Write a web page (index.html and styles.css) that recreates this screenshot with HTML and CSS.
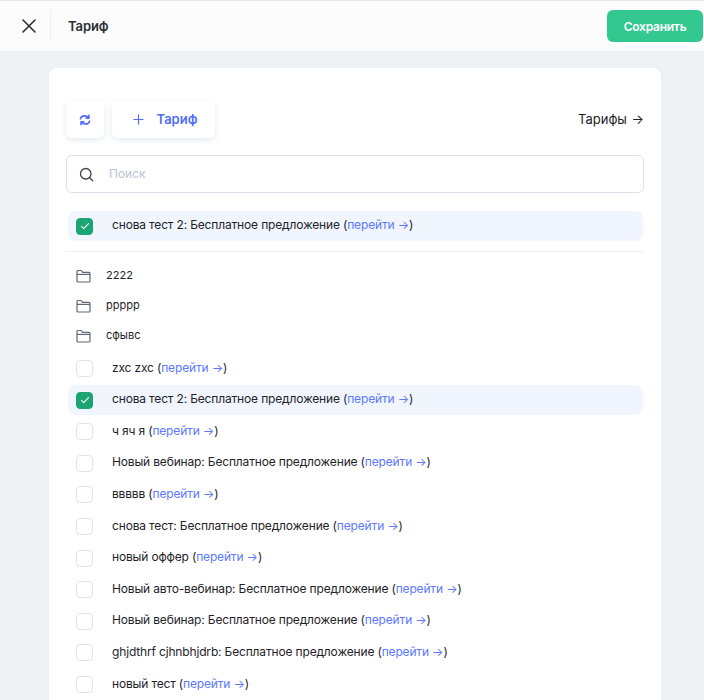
FILE: index.html
```html
<!DOCTYPE html>
<html lang="ru">
<head>
<meta charset="utf-8">
<title>Тариф</title>
<link rel="stylesheet" href="styles.css">
</head>
<body>
<header class="topbar">
  <button class="close" aria-label="Закрыть">
    <svg width="16" height="16" viewBox="0 0 16 16" fill="none" stroke="#2b2f36" stroke-width="1.6" stroke-linecap="round"><path d="M2 2l12 12M14 2L2 14"/></svg>
  </button>
  <div class="title">Тариф</div>
  <button class="save">Сохранить</button>
</header>
<main class="card">
  <div class="toolbar">
    <button class="tool tool-icon" aria-label="Обновить">
      <svg width="12" height="12" viewBox="0 0 14 14" fill="none" stroke="#4f6ef7" stroke-width="1.9" stroke-linecap="round" stroke-linejoin="round"><path d="M1.6 5.6C2.3 3.5 4.3 2.2 6.4 2.2c1.9 0 3.5.8 4.6 2.4"/><path d="M11.6 1.4v3.4H8.4"/><path d="M12.4 8.4c-.7 2.1-2.7 3.4-4.8 3.4-1.9 0-3.5-.8-4.6-2.4"/><path d="M2.4 12.6V9.2h3.2"/></svg>
    </button>
    <button class="tool tool-add">
      <svg width="11" height="11" viewBox="0 0 12 12" fill="none" stroke="#4f6ef7" stroke-width="1.3" stroke-linecap="round"><path d="M6 1v10M1 6h10"/></svg>
      <span>Тариф</span>
    </button>
    <a class="all-link">Тарифы <span class="arrow">→</span></a>
  </div>
  <div class="search">
    <svg width="15" height="15" viewBox="0 0 16 16" fill="none" stroke="#3d434d" stroke-width="1.4" stroke-linecap="round"><circle cx="7.2" cy="7.2" r="5.6"/><path d="M11.4 11.4l3.2 3.2"/></svg>
    <span class="placeholder">Поиск</span>
  </div>
  <div class="row active">
    <span class="check on"><svg width="10" height="8" viewBox="0 0 10 8" fill="none" stroke="#fff" stroke-width="1.1" stroke-linecap="round" stroke-linejoin="round"><path d="M1.5 4.4l2.2 2.2L8.5 1.6"/></svg></span>
    <span class="label">снова тест 2: Бесплатное предложение (<a class="go">перейти →</a>)</span>
  </div>
  <hr class="divider">
  <div class="folders">
    <div class="folder"><svg class="folder-icon" width="15" height="14" viewBox="0 0 15 14" fill="none" stroke="#5f6675" stroke-width="1.2" stroke-linejoin="round"><path d="M1 2.6c0-.7.5-1.1 1.1-1.1h3.2l1.4 1.9h6.2c.6 0 1.1.5 1.1 1.1v7.4c0 .6-.5 1.1-1.1 1.1H2.1c-.6 0-1.1-.5-1.1-1.1z"/><path d="M1 5.4h13"/></svg><span>2222</span></div>
    <div class="folder"><svg class="folder-icon" width="15" height="14" viewBox="0 0 15 14" fill="none" stroke="#5f6675" stroke-width="1.2" stroke-linejoin="round"><path d="M1 2.6c0-.7.5-1.1 1.1-1.1h3.2l1.4 1.9h6.2c.6 0 1.1.5 1.1 1.1v7.4c0 .6-.5 1.1-1.1 1.1H2.1c-.6 0-1.1-.5-1.1-1.1z"/><path d="M1 5.4h13"/></svg><span>ppppp</span></div>
    <div class="folder"><svg class="folder-icon" width="15" height="14" viewBox="0 0 15 14" fill="none" stroke="#5f6675" stroke-width="1.2" stroke-linejoin="round"><path d="M1 2.6c0-.7.5-1.1 1.1-1.1h3.2l1.4 1.9h6.2c.6 0 1.1.5 1.1 1.1v7.4c0 .6-.5 1.1-1.1 1.1H2.1c-.6 0-1.1-.5-1.1-1.1z"/><path d="M1 5.4h13"/></svg><span>сфывс</span></div>
  </div>
  <div class="list">
    <div class="row"><span class="check"></span><span class="label">zxc zxc (<a class="go">перейти →</a>)</span></div>
    <div class="row active"><span class="check on"><svg width="10" height="8" viewBox="0 0 10 8" fill="none" stroke="#fff" stroke-width="1.1" stroke-linecap="round" stroke-linejoin="round"><path d="M1.5 4.4l2.2 2.2L8.5 1.6"/></svg></span><span class="label">снова тест 2: Бесплатное предложение (<a class="go">перейти →</a>)</span></div>
    <div class="row"><span class="check"></span><span class="label">ч яч я (<a class="go">перейти →</a>)</span></div>
    <div class="row"><span class="check"></span><span class="label">Новый вебинар: Бесплатное предложение (<a class="go">перейти →</a>)</span></div>
    <div class="row"><span class="check"></span><span class="label">ввввв (<a class="go">перейти →</a>)</span></div>
    <div class="row"><span class="check"></span><span class="label">снова тест: Бесплатное предложение (<a class="go">перейти →</a>)</span></div>
    <div class="row"><span class="check"></span><span class="label">новый оффер (<a class="go">перейти →</a>)</span></div>
    <div class="row"><span class="check"></span><span class="label">Новый авто-вебинар: Бесплатное предложение (<a class="go">перейти →</a>)</span></div>
    <div class="row"><span class="check"></span><span class="label">Новый вебинар: Бесплатное предложение (<a class="go">перейти →</a>)</span></div>
    <div class="row"><span class="check"></span><span class="label">ghjdthrf cjhnbhjdrb: Бесплатное предложение (<a class="go">перейти →</a>)</span></div>
    <div class="row"><span class="check"></span><span class="label">новый тест (<a class="go">перейти →</a>)</span></div>
  </div>
</main>
</body>
</html>
```
FILE: styles.css
```css
* { box-sizing: border-box; }
html, body { height: 100%; overflow: hidden; }
body {
  margin: 0;
  background: #eff2f4;
  border-top: 1px solid #dfe6ee;
  font-family: Inter, "Noto Sans", sans-serif;
  font-size: 12px;
  color: #1f2329;
}
button { font-family: inherit; border: 0; cursor: pointer; padding: 0; }

.topbar {
  height: 50px;
  background: #fcfcfd;
  display: flex;
  align-items: center;
  padding-right: 1px;
}
.close {
  width: 51px;
  height: 34px;
  background: none;
  border-right: 1px solid #f0f1f3;
  display: flex;
  align-items: center;
  justify-content: center;
  padding-left: 8px;
}
.title { margin-left: 17px; font-size: 13px; font-weight: 600; letter-spacing: -0.1px; flex: 1; color: #2b2f36; }
.save {
  width: 96px;
  height: 32px;
  background: #33c88f;
  color: #fff;
  border-radius: 6px;
  font-size: 12px;
  font-weight: 600;
  letter-spacing: -0.25px;
}

.card {
  width: 612px;
  margin: 17px 0 0 49px;
  background: #fff;
  border-radius: 8px 8px 0 0;
  padding: 33px 17px 0;
}
.toolbar { display: flex; align-items: center; gap: 8px; height: 37px; }
.tool {
  height: 37px;
  background: #fff;
  border-radius: 6px;
  box-shadow: 0 2px 6px rgba(60, 80, 130, 0.13);
  display: flex;
  align-items: center;
  justify-content: center;
  color: #4f6ef7;
  font-size: 13px;
  font-weight: 600;
}
.tool-icon { width: 38px; }
.tool-add { width: 103px; gap: 13px; padding-left: 3px; }
.tool-add span { position: relative; top: -1px; }
.all-link { margin-left: auto; font-size: 13px; color: #1c2026; white-space: nowrap; word-spacing: 1px; position: relative; top: -1px; }
.arrow { font-size: 13px; }

.search {
  margin-top: 17px;
  height: 38px;
  border: 1px solid #e1e0ec;
  border-radius: 6px;
  display: flex;
  align-items: center;
  padding-left: 12px;
  gap: 15px;
}
.placeholder { color: #bcc2d2; font-size: 12px; position: relative; top: -1px; }

.row {
  display: flex;
  align-items: center;
  height: 30px;
  margin: 0 1px 1.6px 2px;
  padding-left: 8px;
  border-radius: 8px;
}
.row.active { background: #f1f6fe; }
.search + .row { margin-top: 18px; margin-bottom: 0; }
.check {
  width: 17px;
  height: 17px;
  flex: none;
  border: 1px solid #e2e3e8;
  border-radius: 4px;
  background: #fff;
  display: flex;
  align-items: center;
  justify-content: center;
}
.check.on { background: #1aa573; border-color: #1aa573; }
.label { margin-left: 19px; font-size: 12px; line-height: 16px; letter-spacing: -0.16px; position: relative; top: -1px; }
.go { color: #5b78ff; }

.divider { border: 0; border-top: 1px solid #f0f1f3; margin: 10px 0 0; }

.folders { padding-top: 9px; margin-bottom: 2.6px; }
.folder {
  display: flex;
  align-items: center;
  height: 30px;
  padding-left: 10px;
  gap: 15px;
  font-size: 11px;
}
.folder span { position: relative; top: -1px; }
.folder-icon { flex: none; }
```
